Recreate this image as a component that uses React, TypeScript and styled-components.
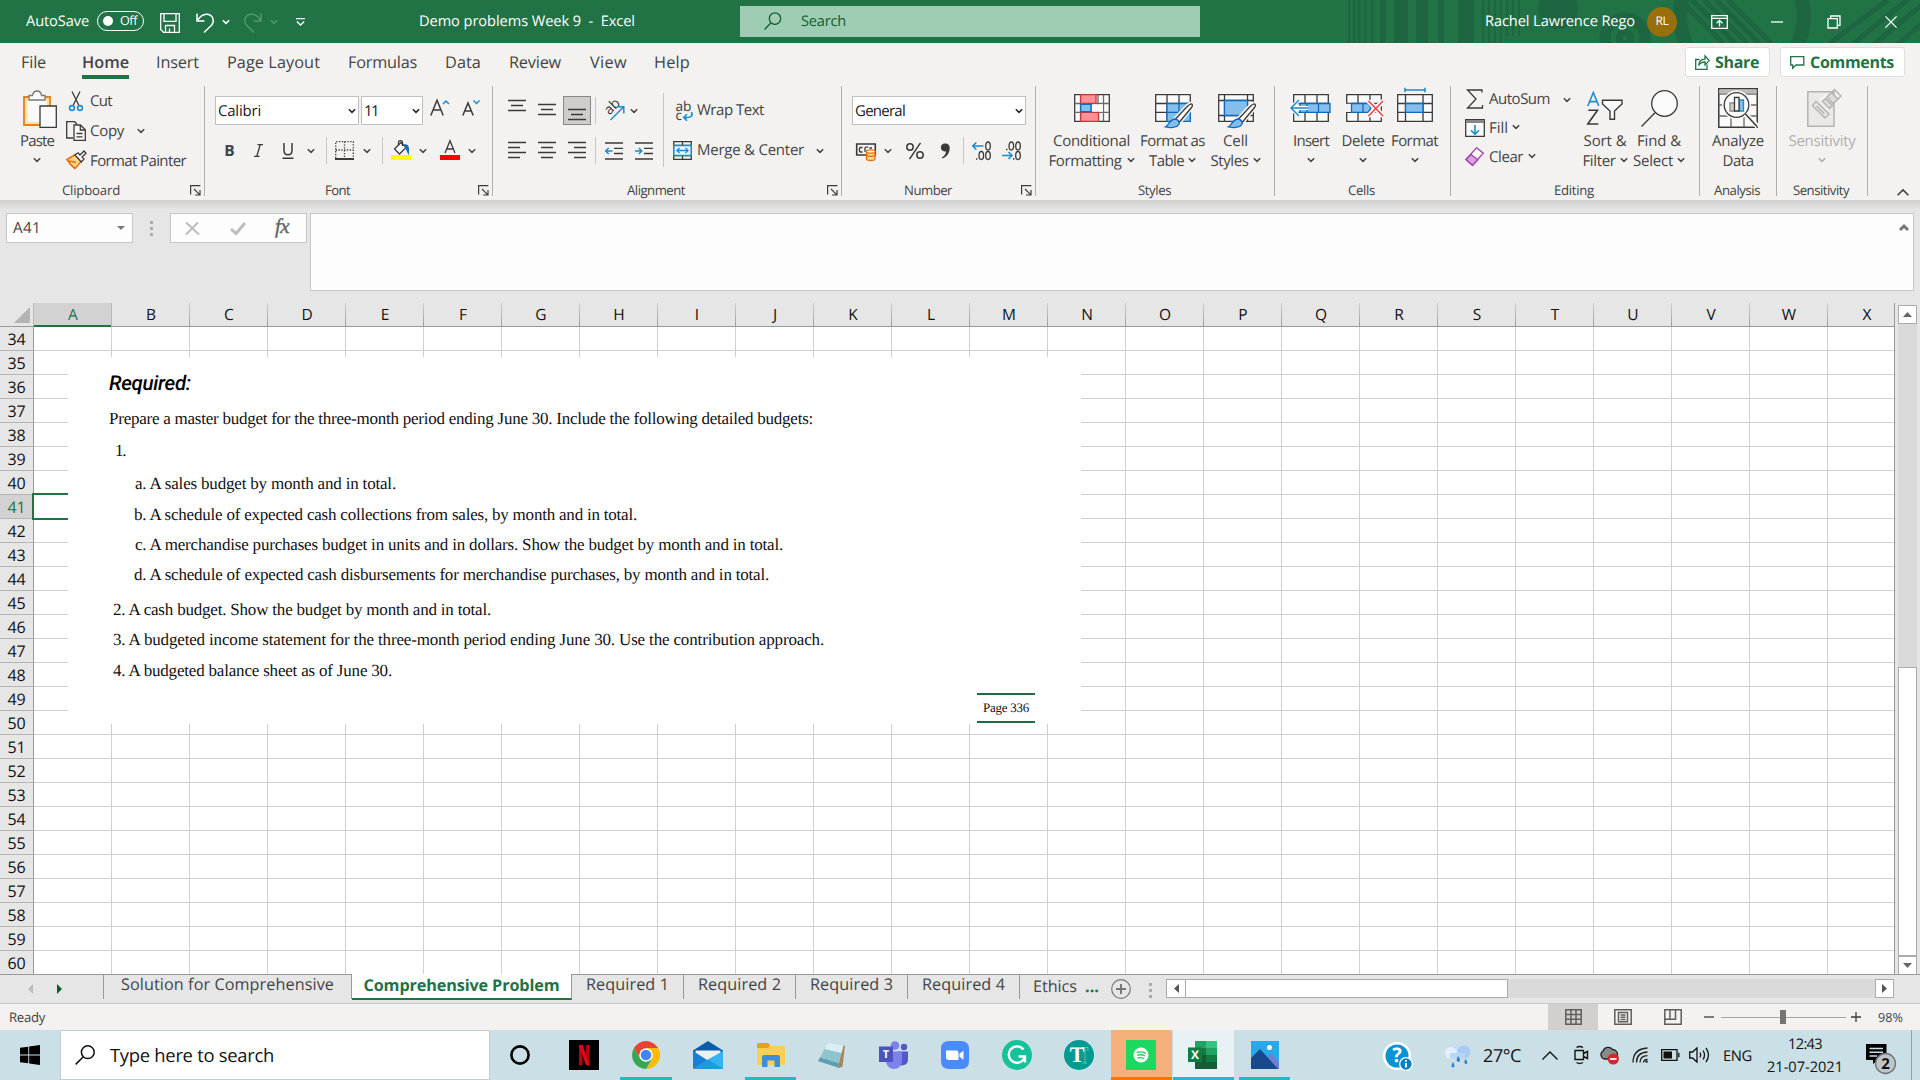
import React, { useLayoutEffect, useRef, useState } from "react";
import styled, { createGlobalStyle, css } from "styled-components";

const UI = `"Open Sans", "Noto Sans", "Liberation Sans", sans-serif`;
const GREEN = "#217346";
const INK = "#444444";

const Global = createGlobalStyle`
  *, *::before, *::after { box-sizing: border-box; }
  html, body { margin: 0; padding: 0; }
  body {
    width: 1920px; height: 1080px; overflow: hidden; background: #e6e6e6;
    font-family: ${UI}; color: ${INK}; text-rendering: geometricPrecision;
  }
`;

/* ---------- text ---------- */

const Txt = styled.span<{ $s: number; $c?: string; $b?: number; $ml?: number; $serif?: boolean }>`
  display: inline-block;
  flex: none;
  white-space: pre;
  line-height: 1.36;
  font-size: ${(p) => p.$s}px;
  color: ${(p) => p.$c ?? "inherit"};
  font-weight: ${(p) => p.$b ?? 400};
  margin-left: ${(p) => p.$ml ?? 0}px;
  ${(p) => p.$serif && css`font-family: "Liberation Serif", serif;`}
`;

type LabelProps = {
  children: string; w?: number; s?: number; c?: string; b?: number; ml?: number; serif?: boolean;
};

/* A label that tracks its letters in or out until the run is `w` pixels long. */
function Label({ children, w, s = 15, c, b, ml, serif }: LabelProps) {
  const ref = useRef<HTMLSpanElement>(null);
  const [track, setTrack] = useState(0);
  useLayoutEffect(() => {
    const el = ref.current;
    if (!el || !w) return;
    el.style.letterSpacing = "0px";
    const natural = el.getBoundingClientRect().width;
    setTrack((w - natural) / children.length);
    el.style.letterSpacing = `${(w - natural) / children.length}px`;
  }, [children, w, s]);
  return (
    <Txt ref={ref} $s={s} $c={c} $b={b} $ml={ml} $serif={serif} style={{ letterSpacing: track }}>
      {children}
    </Txt>
  );
}

/* ---------- glyphs ---------- */

const Svg = styled.svg<{ $ml?: number; $mt?: number }>`
  display: block;
  flex: none;
  overflow: visible;
  margin-left: ${(p) => p.$ml ?? 0}px;
  margin-top: ${(p) => p.$mt ?? 0}px;
  text { font-family: ${UI}; fill: #3b3a39; stroke: none; }
`;

type IconProps = { w: number; h: number; ml?: number; mt?: number; children: React.ReactNode; sw?: number; stroke?: string };
const Icon = ({ w, h, ml, mt, children, sw = 1.3, stroke = "#3b3a39" }: IconProps) => (
  <Svg width={w} height={h} viewBox={`0 0 ${w} ${h}`} $ml={ml} $mt={mt} fill="none" stroke={stroke} strokeWidth={sw}>
    {children}
  </Svg>
);

const Chevron = ({ ml, c = INK, mt }: { ml?: number; c?: string; mt?: number }) => (
  <Icon w={8} h={6} ml={ml} mt={mt} stroke={c} sw={1.5}><path d="M0.8 1.2 4 4.4 7.2 1.2" /></Icon>
);

/* ---------- title bar ---------- */

const TitleBar = styled.header`
  position: relative;
  display: flex;
  align-items: center;
  height: 43px;
  padding-left: 26px;
  background: ${GREEN};
  color: #fff;
`;
const Pattern = styled.svg`
  position: absolute;
  left: 1340px;
  top: 0;
`;
const Toggle = styled.div`
  display: flex;
  align-items: center;
  width: 47px;
  height: 20px;
  margin: -2px 0 0 8px;
  padding-left: 5px;
  border: 1px solid #fff;
  border-radius: 10px;
  &::before { content: ""; width: 10px; height: 10px; border-radius: 50%; background: #fff; }
`;
const SearchBox = styled.div`
  display: flex;
  align-items: center;
  width: 460px;
  height: 31px;
  margin-left: 105px;
  padding: 1px 0 0 24px;
  background: #9fcdb3;
`;
const Avatar = styled.div`
  display: grid;
  place-items: center;
  width: 30px;
  height: 30px;
  margin-left: 12px;
  border-radius: 50%;
  background: #986f0b;
`;
const Above = styled.div`
  position: relative;
  display: flex;
  align-items: center;
`;

function Title() {
  return (
    <TitleBar>
      <Pattern width="580" height="43" fill="none" stroke="#1e6541">
        <g fill="#1e6541" stroke="none">
          {[8, 13, 18, 24, 31].map((x) => <rect key={x} x={x} y="0" width="2.5" height="43" />)}
          <rect x="40" y="0" width="6" height="43" /><rect x="54" y="0" width="14" height="43" />
          <rect x="76" y="0" width="12" height="43" /><rect x="98" y="0" width="6" height="43" />
          <rect x="118" y="0" width="16" height="43" />
          {[142, 148, 154, 160, 166, 172, 178].map((x) => (
            <rect key={x} x={x} y="0" width="2" height={x > 165 ? 36 : 43} />
          ))}
          <circle cx="218" cy="9" r="20" />
        </g>
        <circle cx="285" cy="38" r="20" strokeWidth="11" />
        <circle cx="285" cy="38" r="6" strokeWidth="7" />
        <circle cx="402" cy="16" r="62" strokeWidth="14" />
        <g strokeWidth="5">
          <path d="M340 0 383 43M352 0 395 43M364 0 407 43M376 0 419 43M388 0 431 43" />
          <path d="M548 0 490 43M572 -4 514 43M590 -2 532 46M600 8 556 46" />
        </g>
      </Pattern>
      <Label w={63} s={14.6}>AutoSave</Label>
      <Toggle><Label ml={7} w={17} s={12.6}>Off</Label></Toggle>
      <Icon w={20} h={20} ml={16} stroke="#fff" mt={3}>
        <path d="M0.7 0.7H19.3V19.3H3.5L0.7 16.5ZM4 1V8.3H16V1M5.5 19V12.5H14.5V19M9.5 19V15.5" />
      </Icon>
      <Icon w={18} h={20} ml={16} mt={3} stroke="#fff" sw={1.5}>
        <path d="M1 0.5V8H8.5M1.2 7.8C4 3 8 .8 11.5 1.2 17 2 19 8 15.5 12.2L8 19.5" />
      </Icon>
      <Chevron ml={8} c="#fff" />
      <Icon w={18} h={20} ml={14} mt={3} stroke="#4f9870" sw={1.5}>
        <path d="M17 0.5V8H9.5M16.8 7.8C14 3 10 .8 6.5 1.2 1 2 -1 8 2.5 12.2L10 19.5" />
      </Icon>
      <Chevron ml={8} c="#4f9870" />
      <Icon w={9} h={8} ml={18} stroke="#fff" mt={1}><path d="M0 0.7H9M0.8 3.5 4.5 7 8.2 3.5" /></Icon>
      <Label w={216} s={14.6} ml={114}>{"Demo problems Week 9  -  Excel"}</Label>
      <SearchBox>
        <Icon w={18} h={18} stroke="#0f5c2f" mt={-3}><circle cx="11" cy="6.6" r="5.7" /><path d="M7 10.8 0.5 17.5" /></Icon>
        <Label ml={19} w={45} s={14.6} c="#0f5c2f">Search</Label>
      </SearchBox>
      <Above>
        <Label ml={285} w={150} s={14.6}>Rachel Lawrence Rego</Label>
        <Avatar><Label w={13} s={12}>RL</Label></Avatar>
        <Icon w={17} h={14} ml={34} stroke="#fff">
          <path d="M0.7 0.7H16.3V13.3H0.7ZM1 3.3H16M8.5 11.5V5.5M5.5 8.3 8.5 5.4 11.5 8.3" />
        </Icon>
        <Icon w={12} h={2} ml={43} stroke="#fff"><path d="M0 1H12" /></Icon>
        <Icon w={14} h={14} ml={44} stroke="#fff"><path d="M1 3.7H10.3V13H1ZM3.7 3.5V1H13V10.3H10.6" /></Icon>
        <Icon w={12} h={12} ml={44} stroke="#fff"><path d="M0.4 0.4 11.6 11.6M11.6 0.4 0.4 11.6" /></Icon>
      </Above>
    </TitleBar>
  );
}

/* ---------- ribbon tabs ---------- */

const RibbonTabs = styled.nav`
  display: flex;
  align-items: flex-start;
  height: 43px;
  background: #f3f2f1;
`;
const RibbonTab = styled.div<{ $ml: number; $on?: boolean }>`
  display: flex;
  height: 36px;
  padding-top: 8px;
  margin-left: ${(p) => p.$ml}px;
  border-bottom: 4px solid ${(p) => (p.$on ? GREEN : "transparent")};
`;
const Action = styled.div<{ $ml: number; $w: number }>`
  display: flex;
  align-items: center;
  width: ${(p) => p.$w}px;
  height: 30px;
  margin: 4px 0 0 ${(p) => p.$ml}px;
  padding: 1px 0 0 9px;
  background: #fff;
  border: 1px solid #e1dfdd;
  border-radius: 3px;
`;

const TABS: [string, number, number][] = [
  ["File", 21, 25], ["Home", 36, 47], ["Insert", 27, 43], ["Page Layout", 28, 93], ["Formulas", 28, 69],
  ["Data", 28, 36], ["Review", 28, 52], ["View", 29, 37], ["Help", 27, 36],
];

const Tabs = () => (
  <RibbonTabs>
    {TABS.map(([t, ml, w]) => (
      <RibbonTab key={t} $ml={ml} $on={t === "Home"}><Label w={w} s={16.3} b={t === "Home" ? 600 : 400}>{t}</Label></RibbonTab>
    ))}
    <Action $ml={995} $w={85}>
      <Icon w={15} h={15} stroke={GREEN}>
        <path d="M4.5 4.5H0.7V14.3H12V9.5M3.5 10.5C4 6 6.5 4.3 10 4.2V0.9L14.2 5.6 10 10V7C7 7 5 8 3.5 10.5Z" />
      </Icon>
      <Label ml={5} w={44} s={16} b={700} c={GREEN}>Share</Label>
    </Action>
    <Action $ml={10} $w={125}>
      <Icon w={15} h={13} stroke={GREEN}><path d="M0.7 0.7H13.8V9H6L2.7 12.2V9H0.7Z" /></Icon>
      <Label ml={5} w={84} s={16} b={700} c={GREEN}>Comments</Label>
    </Action>
  </RibbonTabs>
);

/* ---------- ribbon ---------- */

const RibbonBar = styled.section`
  display: flex;
  height: 114px;
  background: #f3f2f1;
`;
const Group = styled.div<{ $w: number }>`
  display: flex;
  flex-direction: column;
  width: ${(p) => p.$w}px;
  height: 110px;
  border-right: 1px solid #b1afad;
`;
const Body = styled.div<{ $pl?: number }>`
  display: flex;
  height: 98px;
  padding-left: ${(p) => p.$pl ?? 0}px;
`;
const Caption = styled.div`
  display: flex;
  align-items: center;
  height: 12px;
  > span { padding-top: 2px; }
`;
const Stack = styled.div<{ $ml?: number; $w?: number; $mt?: number; $row: number }>`
  display: grid;
  grid-auto-rows: ${(p) => p.$row}px;
  width: ${(p) => (p.$w ? p.$w + "px" : "auto")};
  margin: ${(p) => p.$mt ?? 0}px 0 0 ${(p) => p.$ml ?? 0}px;
`;
const Command = styled.div`
  display: flex;
  align-items: center;
`;
const IconCell = styled.div<{ $w: number; $ml?: number; $on?: boolean }>`
  display: flex;
  justify-content: center;
  align-items: center;
  flex: none;
  width: ${(p) => p.$w}px;
  height: 29px;
  margin-left: ${(p) => p.$ml ?? 0}px;
  ${(p) => p.$on && css`background: #cfcdcc; border: 1px solid #8a8886;`}
`;
const TwoRows = styled.div`
  display: grid;
  grid-template-rows: 29px 29px;
  row-gap: 11px;
  margin-top: 10px;
  align-content: start;
`;
const Row = styled.div`
  display: flex;
  align-items: center;
`;
const Divider = styled.i<{ $ml: number; $h?: number; $mt?: number }>`
  flex: none;
  width: 1px;
  height: ${(p) => p.$h ?? 27}px;
  margin: ${(p) => p.$mt ?? 0}px 0 0 ${(p) => p.$ml}px;
  background: #c8c6c4;
`;
const Combo = styled.div<{ $w: number; $ml?: number }>`
  display: flex;
  align-items: center;
  justify-content: space-between;
  width: ${(p) => p.$w}px;
  height: 29px;
  margin-left: ${(p) => p.$ml ?? 0}px;
  padding: 1px 2px 0 2px;
  border: 1px solid #c2c0be;
  background: #fff;
  color: #222;
`;
const BigButton = styled.div<{ $w: number; $ml?: number }>`
  display: grid;
  grid-template-rows: 45px 20px 20px;
  justify-items: center;
  align-items: center;
  align-content: start;
  width: ${(p) => p.$w}px;
  margin-left: ${(p) => p.$ml ?? 0}px;
`;
const Line = styled.div`
  display: flex;
  align-items: center;
`;

const Launcher = ({ ml }: { ml: number }) => (
  <Icon w={11} h={11} ml={ml} sw={1.2}><path d="M0.6 9.5V0.6H10.4M4 4 9.8 9.8M10 5V10H5" /></Icon>
);

const B = "#1e8bcd", LB = "#83beec";
const cellGrid = "M0.7 0.7H35.3V27.3H0.7ZM0.7 9.5H35.3M0.7 18.3H35.3M12 0.7V27.3M24 0.7V27.3";
const Brush = () => (
  <g>
    <path d="M36 9.5C38.5 10 38 12 36.5 14L24.5 29 19.5 25.5 31 13C33 11 34.5 9.7 36 9.5Z" fill="#fafafa" stroke="#f3f2f1" strokeWidth="3.5" />
    <path d="M36.5 9.8C38 10.5 37.5 12 36.5 13.5L24.5 28 20.5 25 31.5 13.2C33.5 11.2 35 9.8 36.5 9.8Z" fill="#fafafa" />
    <path d="M20 25C23 25.5 25 28 23.8 30.5 21.5 34 15 34 10.5 32.8 14 31.5 13.5 26 20 25Z" fill={LB} stroke="#0f6cbd" />
  </g>
);

const AlignLines = ({ rows, mt = 0, sw = 1.5 }: { rows: [number, number][]; mt?: number; sw?: number }) => (
  <Icon w={18} h={rows.length * 5} mt={mt} sw={sw}>
    {rows.map(([a, b], i) => <path key={i} d={`M${a} ${i * 5 + 1.5}H${b}`} />)}
  </Icon>
);

function Ribbon() {
  return (
    <RibbonBar>
      <Group $w={205}>
        <Body $pl={17}>
          <BigButton $w={38}>
            <Icon w={34} h={39} ml={6} mt={1}>
              <path d="M1 7H27V35H1Z" fill="#ffe0a0" stroke="#e3831c" strokeWidth="1.8" />
              <path d="M4.5 10H23.5V32H4.5Z" fill="#fafafa" stroke="none" />
              <path d="M6 10V5.5H9.5C10 2.5 12 1 14 1S18 2.5 18.5 5.5H22V10Z" fill="#fafafa" stroke="#7a7877" />
              <path d="M17 16H33.3V37.3H17Z" fill="#fafafa" />
            </Icon>
            <Label w={34}>Paste</Label><Chevron mt={-2} />
          </BigButton>
          <Stack $ml={11} $row={30}>
            <Command>
              <Icon w={20} h={20}>
                <path d="M6 0.5 12.7 14M14 0.5 7.3 14" /><circle cx="6" cy="17" r="2.4" stroke={B} strokeWidth="1.6" />
                <circle cx="14" cy="17" r="2.4" stroke={B} strokeWidth="1.6" />
              </Icon>
              <Label ml={4} w={22}>Cut</Label>
            </Command>
            <Command>
              <Icon w={20} h={20}>
                <path d="M7 17H0.7V0.7H8.5L11 3" /><path d="M8 4H14.5L19.3 8.8V19.3H8Z" fill="#fafafa" /><path d="M14.3 4V9H19M10.5 12.5H16.5M10.5 15.8H16.5" />
              </Icon>
              <Label ml={4} w={34}>Copy</Label><Chevron ml={13} />
            </Command>
            <Command>
              <Icon w={20} h={20} mt={-3}>
                <path d="M1 9.5 9.5 4.5 15.5 11 9 18.5C6 16.5 3 13 1 9.5Z" fill="#ffd68a" stroke="#e3700c" strokeWidth="1.6" />
                <path d="M3 11 10 12.5" stroke="#e3700c" />
                <path d="M9 5 12 2.8 14 5 18 1 20 3.2 16 7 18 9 15.3 12Z" fill="#fafafa" />
              </Icon>
              <Label ml={4} w={96}>Format Painter</Label>
            </Command>
          </Stack>
        </Body>
        <Caption><Label ml={62} w={58} s={13.2}>Clipboard</Label><Launcher ml={70} /></Caption>
      </Group>

      <Group $w={288}>
        <Body $pl={10}>
          <TwoRows>
            <Row>
              <Combo $w={144}><Label w={43}>Calibri</Label><Chevron c="#222" /></Combo>
              <Combo $w={62} $ml={2}><Label w={14}>11</Label><Chevron c="#222" /></Combo>
              <Icon w={20} h={20} ml={7} mt={-6} sw={1.5}>
                <path d="M0.8 17.5 7 2.3 13.2 17.5M3 12H11" /><path d="M13 6 16 3 19 6" stroke={B} />
              </Icon>
              <Icon w={18} h={20} ml={12} mt={-6} sw={1.5}>
                <path d="M0.8 17.5 6 5 11.2 17.5M3 13H9" /><path d="M11.5 2.5 14.5 5.5 17.5 2.5" stroke={B} />
              </Icon>
            </Row>
            <Row>
              <IconCell $w={29}><Label s={15.5} b={700}>B</Label></IconCell>
              <IconCell $w={29}><Icon w={9} h={13} mt={-1}><path d="M3.5 .7H9M0 12.3H5.5M6.2 .7 2.8 12.3" /></Icon></IconCell>
              <IconCell $w={29}><Icon w={12} h={16} mt={1} sw={1.5}><path d="M2 0V7.5C2 13.3 10 13.3 10 7.5V0M0.5 15.3H11.5" /></Icon></IconCell>
              <IconCell $w={18}><Chevron /></IconCell>
              <Divider $ml={6} />
              <IconCell $w={29} $ml={3}>
                <Icon w={19} h={19} mt={-1}>
                  <path d="M0.7 17V0.7H18.3V17M9.5 0.7V17M0.7 9H18.3" strokeDasharray="1.3 1.5" /><path d="M0 18H19" strokeWidth="2" />
                </Icon>
              </IconCell>
              <IconCell $w={16}><Chevron /></IconCell>
              <Divider $ml={7} />
              <IconCell $w={30} $ml={3}>
                <Icon w={20} h={20} mt={-1}>
                  <path d="M3.5 9 10 2.5 15 7.5 8.5 14Z" fill="#fafafa" /><path d="M7.5 5V2.5C7.5 0 11.5 0 11.5 3V6" />
                  <path d="M13.5 5C17 4.5 17.8 7 17.3 13L15.5 9Z" fill="#0f6cbd" stroke="#0f6cbd" />
                  <path d="M0 15H20V20H0Z" fill="#ff0" stroke="none" />
                </Icon>
              </IconCell>
              <IconCell $w={14}><Chevron /></IconCell>
              <IconCell $w={30} $ml={5}>
                <Icon w={20} h={20} mt={-1}><path d="M5 13 10 0.8 15 13M6.7 9H13.3" /><path d="M0 15H20V20H0Z" fill="#f00" stroke="none" /></Icon>
              </IconCell>
              <IconCell $w={14}><Chevron /></IconCell>
            </Row>
          </TwoRows>
        </Body>
        <Caption><Label ml={120} w={25} s={13.2}>Font</Label><Launcher ml={128} /></Caption>
      </Group>

      <Group $w={349}>
        <Body $pl={9}>
          <TwoRows>
            <Row>
              <IconCell $w={30}><AlignLines rows={[[0, 18], [3, 15], [0, 18]]} mt={-9} /></IconCell>
              <IconCell $w={30}><AlignLines rows={[[0, 18], [3, 15], [0, 18]]} mt={-1} /></IconCell>
              <IconCell $w={28} $ml={1} $on><AlignLines rows={[[0, 18], [3, 15], [0, 18]]} mt={9} /></IconCell>
              <Divider $ml={4} />
              <IconCell $w={28} $ml={4}>
                <Icon w={21} h={20}>
                  <text x="0" y="0" fontSize="14" transform="translate(5.5 14.5) rotate(-45)">ab</text>
                  <path d="M6.5 19 19.5 6M13 5.8H19.8V12.5" stroke={B} strokeWidth="1.5" />
                </Icon>
              </IconCell>
              <IconCell $w={12}><Chevron /></IconCell>
            </Row>
            <Row>
              <IconCell $w={30}><AlignLines rows={[[0, 18], [0, 12], [0, 18], [0, 12]]} /></IconCell>
              <IconCell $w={30}><AlignLines rows={[[0, 18], [3, 15], [0, 18], [3, 15]]} /></IconCell>
              <IconCell $w={30}><AlignLines rows={[[0, 18], [6, 18], [0, 18], [6, 18]]} /></IconCell>
              <Divider $ml={3} />
              <IconCell $w={28} $ml={4}>
                <Icon w={18} h={18}><path d="M0 1H18M9 6.3H18M9 11.5H18M0 17H18" /><path d="M7.5 9H0.7M3.7 6 0.7 9 3.7 12" stroke={B} strokeWidth="1.5" /></Icon>
              </IconCell>
              <IconCell $w={32}>
                <Icon w={18} h={18}><path d="M0 1H18M9 6.3H18M9 11.5H18M0 17H18" /><path d="M0 9H6.8M3.8 6 6.8 9 3.8 12" stroke={B} strokeWidth="1.5" /></Icon>
              </IconCell>
            </Row>
          </TwoRows>
          <Divider $ml={3} $h={74} $mt={7} />
          <TwoRows>
            <Row>
              <Icon w={17} h={20} ml={12} sw={1.4}>
                <text x="-0.5" y="9.5" fontSize="13.5" textLength="16" lengthAdjust="spacingAndGlyphs">ab</text>
                <text x="-0.5" y="19" fontSize="13.5">c</text>
                <path d="M15.5 11C17.5 15.5 14 17 8 16.5M11 13.2 7.7 16.5 11 19.8" stroke={B} strokeWidth="1.6" />
              </Icon>
              <Label ml={4} w={67}>Wrap Text</Label>
            </Row>
            <Row>
              <Icon w={19} h={19} ml={9} mt={-1}>
                <path d="M0.7 0.7H18.3V18.3H0.7ZM0.7 4.5H18.3M0.7 14.5H18.3M9.5 .7V4.5M9.5 14.5V18" />
                <path d="M0.8 4.5H18.2V14.5H0.8Z" fill="#e9f4fb" stroke={B} strokeWidth="1.6" /><path d="M4 9.5H15M6.5 7 4 9.5 6.5 12M12.5 7 15 9.5 12.5 12" stroke={B} />
              </Icon>
              <Label ml={5} w={107}>{"Merge & Center"}</Label><Chevron ml={12} />
            </Row>
          </TwoRows>
        </Body>
        <Caption><Label ml={134} w={58} s={13.2}>Alignment</Label><Launcher ml={142} /></Caption>
      </Group>

      <Group $w={194}>
        <Body $pl={10}>
          <TwoRows>
            <Combo $w={174}><Label w={50}>General</Label><Chevron c="#222" /></Combo>
            <Row>
              <IconCell $w={28}>
                <Icon w={20} h={20}>
                  <path d="M0.7 3H19.3V14H0.7Z" strokeWidth="1.6" /><path d="M6.5 6.5H4.5C3 6.5 3 11 4.5 11H6.5M9 11V7C9 6 12 6 12 6.5M13.5 7H16" />
                  <path d="M10.5 10.5V18C10.5 20 19 20 19 18V10.5Z" fill="#ffd68a" stroke="#e3700c" /><ellipse cx="14.8" cy="10.5" rx="4.3" ry="1.7" fill="#fff" stroke="#e3700c" /><path d="M10.5 14C11 15.8 18.5 15.8 19 14" stroke="#e3700c" />
                </Icon>
              </IconCell>
              <IconCell $w={16}><Chevron /></IconCell>
              <IconCell $w={37}>
                <Icon w={18} h={18} sw={1.5}><circle cx="4" cy="5" r="3.2" /><circle cx="14" cy="13" r="3.2" /><path d="M14.5 0.8 3.5 17.2" /></Icon>
              </IconCell>
              <IconCell $w={25}>
                <Icon w={9} h={16}><path d="M4.3 0.5A4 4 0 0 1 8.7 5C8.7 10 6 14 1.3 15.5L.8 14.6C3.5 13 5 11 5 8.3A4 4 0 1 1 4.3 0.5Z" fill="#3b3a39" stroke="none" /></Icon>
              </IconCell>
              <Divider $ml={5} />
              <IconCell $w={27} $ml={4}>
                <Icon w={19} h={19} mt={-1}>
                  <path d="M11.5 5H0.8M4.3 1.5 0.8 5 4.3 8.5" stroke={B} strokeWidth="1.6" /><ellipse cx="16" cy="5" rx="2.3" ry="4" />
                  <ellipse cx="9.3" cy="14.5" rx="2.3" ry="4" /><ellipse cx="16" cy="14.5" rx="2.3" ry="4" /><path d="M4 18H5.4" />
                </Icon>
              </IconCell>
              <IconCell $w={32}>
                <Icon w={19} h={19} mt={-1}>
                  <ellipse cx="9.3" cy="5" rx="2.3" ry="4" /><ellipse cx="16" cy="5" rx="2.3" ry="4" /><path d="M4 8.5H5.4M11 18H12.4" />
                  <ellipse cx="16" cy="14.5" rx="2.3" ry="4" /><path d="M0 14.5H10M6.5 11 10 14.5 6.5 18" stroke={B} strokeWidth="1.6" />
                </Icon>
              </IconCell>
            </Row>
          </TwoRows>
        </Body>
        <Caption><Label ml={62} w={48} s={13.2}>Number</Label><Launcher ml={69} /></Caption>
      </Group>

      <Group $w={239}>
        <Body $pl={10}>
          <BigButton $w={91}>
            <Icon w={36} h={28} mt={-1}>
              <path d="M0.7 0.7H35.3V27.3H0.7Z" fill="#fafafa" /><path d="M0.7 9.5H35.3M0.7 18.3H35.3M6.5 0.7V27.3M18 .7V27M24 .7V27M29.5 0.7V27.3" stroke="#6b6967" />
              <path d="M6.7 0.7H22V9.5H6.7ZM6.7 18.3H24.5V27.3H6.7Z" fill="#ff9196" stroke="#d13438" /><path d="M6.7 10.3H17V17.6H6.7Z" fill={LB} stroke="#0f6cbd" />
              <path d="M18 10.3H29V17.6H18Z" fill="#fafafa" stroke="none" />
            </Icon>
            <Label w={77}>Conditional</Label>
            <Line><Label w={73}>Formatting</Label><Chevron ml={5} mt={-3} /></Line>
          </BigButton>
          <BigButton $w={71}>
            <Icon w={38} h={28} ml={2} mt={-1}>
              <path d={cellGrid} fill="#fafafa" /><path d="M12 9.5H35.3V27.3H12ZM12 18.3H35M24 9.5V27" fill={LB} stroke="#0f6cbd" /><Brush />
            </Icon>
            <Label w={65}>Format as</Label>
            <Line><Label w={35}>Table</Label><Chevron ml={4} mt={-3} /></Line>
          </BigButton>
          <BigButton $w={55}>
            <Icon w={38} h={28} ml={3} mt={-1}>
              <path d="M0.7 0.7H35.3V27.3H0.7ZM0.7 6.5H35.3M0.7 21.5H35.3M6.5 .7V27.3M29.5 .7V27.3" fill="#fafafa" />
              <path d="M6.5 6.5H29.5V21.5H6.5Z" fill={LB} stroke="#0f6cbd" /><Brush />
            </Icon>
            <Label w={25}>Cell</Label>
            <Line><Label w={38}>Styles</Label><Chevron ml={4} mt={-3} /></Line>
          </BigButton>
        </Body>
        <Caption><Label ml={102} w={33} s={13.2}>Styles</Label></Caption>
      </Group>

      <Group $w={176}>
        <Body $pl={9}>
          <BigButton $w={54}>
            <Icon w={38} h={28} mt={-1} ml={2}>
              <path d={cellGrid} fill="#fafafa" /><path d="M7 9.5H37V18.3H7ZM14 9.5V18M25.5 9.5V18" fill={LB} stroke="#0f6cbd" />
              <path d="M15 14H-1.5M6 6-2 14 6 22" stroke="#fafafa" strokeWidth="4" /><path d="M15 14H-1.5M6 6-2 14 6 22" stroke={B} strokeWidth="1.5" />
            </Icon>
            <Label w={36}>Insert</Label><Chevron mt={-2} />
          </BigButton>
          <BigButton $w={50}>
            <Icon w={36} h={28} mt={-1} ml={1}>
              <path d={cellGrid} fill="#fafafa" /><path d="M0 9.8H6V18H0Z" fill="#f3f2f1" stroke="none" /><path d="M5.5 9.5H22L25 14 22 18.3H5.5ZM17 9.5V18" fill={LB} stroke="#0f6cbd" />
              <path d="M22.5 7 37 22M37 7 22.5 22" stroke="#fafafa" strokeWidth="5" /><path d="M22.5 7 37 22M37 7 22.5 22" stroke="#f03e3e" strokeWidth="1.5" />
            </Icon>
            <Label w={43}>Delete</Label><Chevron mt={-2} />
          </BigButton>
          <BigButton $w={53}>
            <Icon w={36} h={28} mt={-1}>
              <path d="M0.7 0.7H35.3V27.3H0.7ZM0.7 9.5H35.3M0.7 18.3H35.3M8.5 .7V27.3M26 .7V27.3" fill="#fafafa" />
              <path d="M8.5 9.5H26V18.3H8.5Z" fill={LB} stroke="#0f6cbd" /><path d="M8 -4H28M8 -6.3V-1.7M28 -6.3V-1.7" stroke={B} strokeWidth="1.5" />
            </Icon>
            <Label w={47}>Format</Label><Chevron mt={-2} />
          </BigButton>
        </Body>
        <Caption><Label ml={73} w={27} s={13.2}>Cells</Label></Caption>
      </Group>

      <Group $w={249}>
        <Body $pl={14}>
          <Stack $row={29} $mt={-1} $w={115}>
            <Command>
              <Icon w={20} h={20} mt={-2}><path d="M17 3.5V1H2.5L11 10 2.5 19H17.5V16" /></Icon>
              <Label ml={4} w={61}>AutoSum</Label><Chevron ml={13} />
            </Command>
            <Command>
              <Icon w={20} h={18} mt={-1}><path d="M0.7 0.7H19.3V17.3H0.7Z" fill="#fafafa" /><path d="M1 2.5H19" stroke="#8a8886" strokeWidth="3" /><path d="M10 6V15M6 11.3 10 15.3 14 11.3" stroke={B} strokeWidth="1.6" /></Icon>
              <Label ml={4} w={19}>Fill</Label><Chevron ml={4} mt={-3} />
            </Command>
            <Command>
              <Icon w={20} h={20} stroke="#a33cb0" mt={-1}><path d="M11.5 0.8 18.3 6.2 7.5 18.3 1 12.5Z" fill="#fafafa" /><path d="M6 7.5 12.8 12.8 7.5 18.3 1 12.5Z" fill="#d9a3df" /></Icon>
              <Label ml={4} w={34}>Clear</Label><Chevron ml={5} mt={-3} />
            </Command>
          </Stack>
          <BigButton $w={50}>
            <Icon w={36} h={35} sw={1.6} mt={-1}>
              <path d="M0.8 15 6.3 1.5 11.8 15M2.6 10.6H10" stroke={B} /><path d="M1.3 19.2H10.5L0.8 33H11.3" />
              <path d="M15.5 9.3H35V13L27.5 20V28.3H23V20L15.5 13Z" fill="#fafafa" strokeWidth="1.4" />
            </Icon>
            <Label w={43}>{"Sort &"}</Label>
            <Line><Label w={33}>Filter</Label><Chevron ml={4} mt={-3} /></Line>
          </BigButton>
          <BigButton $w={58}>
            <Icon w={37} h={37} mt={-1}><circle cx="23.5" cy="13.5" r="12.8" fill="#fafafa" /><path d="M14 22.8 0.5 36.5" /></Icon>
            <Label w={44}>{"Find &"}</Label>
            <Line><Label w={40}>Select</Label><Chevron ml={4} mt={-3} /></Line>
          </BigButton>
        </Body>
        <Caption><Label ml={103} w={40} s={13.2}>Editing</Label></Caption>
      </Group>

      <Group $w={77}>
        <Body $pl={11}>
          <BigButton $w={54}>
            <Icon w={40} h={40} mt={-1}>
              <path d="M0.8 0.8H39.2V39.2H0.8Z" fill="#fafafa" strokeWidth="1.5" /><path d="M1.5 3.5H38.5" stroke="#bdbbb9" strokeWidth="4" />
              <path d="M1 6.2H39M1 17H39M1 28H39M13 28V39M26 28V39" stroke="#6b6967" />
              <circle cx="18.5" cy="17" r="14.5" fill="#fafafa" stroke="none" /><circle cx="18.5" cy="17" r="12.3" fill="#fafafa" />
              <path d="M27.5 26 39.5 38.5" stroke="#fafafa" strokeWidth="5" /><path d="M27.5 26 39 38.5" strokeWidth="1.6" />
              <path d="M12 15H16.5V23H12Z" fill="#d2d0ce" stroke="#8a8886" /><path d="M21 12H25.5V23H21Z" fill={LB} stroke={B} /><path d="M16.5 9.5H21V23H16.5Z" fill="#fff" />
            </Icon>
            <Label w={52}>Analyze</Label><Label w={31}>Data</Label>
          </BigButton>
        </Body>
        <Caption><Label ml={14} w={46} s={13.2}>Analysis</Label></Caption>
      </Group>

      <Group $w={91}>
        <Body $pl={10}>
          <BigButton $w={70}>
            <Icon w={34} h={38} stroke="#b5b3b1" ml={4} mt={-2} sw={1.5}>
              <path d="M0.8 2.8H27V37.2H0.8Z" fill="#ebe9e8" />
              <path d="M19 4 26 12 20.5 22 12 10Z" fill="#f3f2f1" stroke="none" />
              <path d="M9 12.5 22 25 18 29 5.5 16.5ZM9.5 17 17.5 25" /><path d="M15.5 12.5 18.5 9.5 25.5 16.5 22.5 19.5ZM20 8 24.5 3.5 31 10 26 14.5Z" fill="#dedcdb" /><path d="M24.5 3.5 27.5 0.5 34 7 31 10" />
            </Icon>
            <Label w={67} c="#b1afad">Sensitivity</Label><Chevron c="#b1afad" mt={-2} />
          </BigButton>
        </Body>
        <Caption><Label ml={16} w={56} s={13.2}>Sensitivity</Label></Caption>
      </Group>
      <Icon w={12} h={7} ml={29} mt={103} sw={1.5}><path d="M0.6 6.3 6 0.9 11.4 6.3" /></Icon>
    </RibbonBar>
  );
}

/* ---------- formula bar ---------- */

const FormulaBar = styled.section`
  display: flex;
  align-items: flex-start;
  height: 103px;
  padding: 13px 0 0 6px;
  background: linear-gradient(#cfcfcf, #e6e6e6 10px);
`;
const NameBox = styled.div`
  display: flex;
  align-items: center;
  width: 127px;
  height: 30px;
  padding-left: 6px;
  background: #fdfdfd;
  border: 1px solid #c6c6c6;
  > span { padding-top: 1px; }
`;
const FxBox = styled(NameBox)`
  width: 137px;
  margin-left: 17px;
`;
const FormulaInput = styled.div`
  width: 1604px;
  height: 78px;
  margin-left: 3px;
  padding: 10px 0 0 1588px;
  background: #fdfdfd;
  border: 1px solid #c6c6c6;
`;
const Dots = styled.div<{ $ml: number; $mt?: number }>`
  display: grid;
  gap: 3px;
  width: 3px;
  margin: ${(p) => p.$mt ?? 0}px 0 0 ${(p) => p.$ml}px;
  i { width: 3px; height: 3px; background: #ababab; }
`;
const Fx = styled.b`
  margin: -3px 0 0 29px;
  font: italic 400 21px/1 "Liberation Serif", serif;
  letter-spacing: -0.5px;
  color: #666;
  -webkit-text-stroke: 0.4px #666;
`;

const Formula = () => (
  <FormulaBar>
    <NameBox>
      <Label w={28} s={15.2}>A41</Label>
      <Icon w={8} h={4} ml={76}><path d="M0 0H8L4 4Z" fill="#777" stroke="none" /></Icon>
    </NameBox>
    <Dots $ml={17} $mt={8}><i /><i /><i /></Dots>
    <FxBox>
      <Icon w={15} h={13} ml={8} stroke="#bdbdbd" sw={2}><path d="M1 .5 14 12.5M13 .5 1 12.5" /></Icon>
      <Icon w={16} h={13} ml={30} stroke="#bdbdbd" sw={3}><path d="M1 7 6 11.5 15 1" /></Icon>
      <Fx>fx</Fx>
    </FxBox>
    <FormulaInput><Icon w={10} h={7} stroke="#777" sw={3}><path d="M1 6 5 2 9 6" /></Icon></FormulaInput>
  </FormulaBar>
);

/* ---------- sheet ---------- */

const Sheet = styled.main`
  position: relative;
  display: flex;
  height: 672px;
`;
const GridPane = styled.div`
  width: 1895px;
  border-right: 1px solid #999;
  overflow: hidden;
  background: #fff;
`;
const HeadRow = styled.div`
  display: flex;
  width: 1910px;
  height: 24px;
  background: #e6e6e6;
  border-bottom: 1px solid #999;
`;
const Corner = styled.div`
  display: flex;
  flex: none;
  width: 34px;
  padding: 4px 0 0 14px;
  border-right: 1px solid #b8b8b8;
`;
const ColHead = styled.div<{ $on?: boolean }>`
  flex: none;
  width: 78px;
  height: 23px;
  padding-left: 1px;
  text-align: center;
  font-size: 15.5px;
  line-height: 23px;
  color: ${(p) => (p.$on ? GREEN : "#111")};
  border-right: 1px solid;
  border-image: linear-gradient(#d2d2d2, #999) 1;
  ${(p) => p.$on && css`height: 24px; background: #d2d2d2; border-image: none; border-right-color: #b8b8b8; box-shadow: inset 0 -2px ${GREEN};`}
`;
const GridRow = styled.div`
  display: flex;
  width: 1910px;
  height: 24px;
`;
const RowHead = styled.div<{ $on?: boolean }>`
  flex: none;
  width: 34px;
  text-align: center;
  font-size: 16px;
  line-height: 25px;
  letter-spacing: -0.2px;
  color: ${(p) => (p.$on ? GREEN : "#111")};
  background: ${(p) => (p.$on ? "#d2d2d2" : "#e6e6e6")};
  border-right: 1px solid #999;
  border-bottom: 1px solid #b5b5b5;
`;
const Cell = styled.div`
  flex: none;
  width: 78px;
  border-right: 1px solid #d0d0d0;
  border-bottom: 1px solid #d0d0d0;
`;
const Selection = styled.div`
  position: absolute;
  left: 32px;
  top: 190px;
  width: 81px;
  height: 27px;
  border: 2px solid ${GREEN};
`;
const Clip = styled.article`
  position: absolute;
  left: 68px;
  top: 54px;
  width: 1013px;
  height: 367px;
  padding-left: 41px;
  background: #fff;
  color: #111;
`;
const Heading = styled.h1`
  margin: 15px 0 0 0;
  height: 24px;
  font: italic 500 20.5px/24px Roboto, sans-serif;
  letter-spacing: -0.3px;
  color: #000;
`;
const Para = styled.p<{ $ml?: number; $mt: number }>`
  display: flex;
  align-items: center;
  height: 20px;
  margin: ${(p) => p.$mt}px 0 0 ${(p) => p.$ml ?? 0}px;
`;
const PageTag = styled.div`
  display: grid;
  place-items: center;
  width: 58px;
  height: 30px;
  margin: 12px 0 0 868px;
  border: solid #1f6b41;
  border-width: 2px 0;
`;
const VScroll = styled.div`
  display: flex;
  flex-direction: column;
  width: 19px;
  height: 670px;
  margin: 2px 0 0 3px;
  background: #dadada;
`;
const ScrollPart = styled.div<{ $w: number; $h: number; $ml?: number; $mt?: number }>`
  display: grid;
  place-items: center;
  flex: none;
  width: ${(p) => p.$w}px;
  height: ${(p) => p.$h}px;
  margin: ${(p) => p.$mt ?? 0}px 0 0 ${(p) => p.$ml ?? 0}px;
  background: #fff;
  border: 1px solid #ababab;
`;

const COLS = "ABCDEFGHIJKLMNOPQRSTUVWX".split("");
const ROWS = Array.from({ length: 27 }, (_, i) => 34 + i);
const PARAS: [string, number, number, number][] = [
  ["Prepare a master budget for the three-month period ending June 30. Include the following detailed budgets:", 0, 13, 704],
  ["1.", 6, 12, 10],
  ["a. A sales budget by month and in total.", 26, 13, 261],
  ["b. A schedule of expected cash collections from sales, by month and in total.", 25, 11, 503],
  ["c. A merchandise purchases budget in units and in dollars. Show the budget by month and in total.", 26, 10, 648],
  ["d. A schedule of expected cash disbursements for merchandise purchases, by month and in total.", 25, 10, 635],
  ["2. A cash budget. Show the budget by month and in total.", 4, 15, 378],
  ["3. A budgeted income statement for the three-month period ending June 30. Use the contribution approach.", 4, 10, 711],
  ["4. A budgeted balance sheet as of June 30.", 4, 11, 279],
];

const Workbook = () => (
  <Sheet>
    <GridPane>
      <HeadRow>
        <Corner><Icon w={16} h={16}><path d="M16 0V16H0Z" fill="#b3b3b3" stroke="none" /></Icon></Corner>
        {COLS.map((c) => <ColHead key={c} $on={c === "A"}>{c}</ColHead>)}
      </HeadRow>
      {ROWS.map((r) => (
        <GridRow key={r}>
          <RowHead $on={r === 41}>{r}</RowHead>
          {COLS.map((c) => <Cell key={c} />)}
        </GridRow>
      ))}
    </GridPane>
    <VScroll>
      <ScrollPart $w={19} $h={19}><Icon w={9} h={5}><path d="M0 5H9L4.5 0Z" fill="#666" stroke="none" /></Icon></ScrollPart>
      <ScrollPart $w={19} $h={289} $mt={343} />
      <ScrollPart $w={19} $h={19}><Icon w={9} h={5}><path d="M0 0H9L4.5 5Z" fill="#666" stroke="none" /></Icon></ScrollPart>
    </VScroll>
    <Selection />
    <Clip>
      <Heading>Required:</Heading>
      {PARAS.map(([t, ml, mt, w]) => (
        <Para key={t} $ml={ml} $mt={mt}><Label serif s={17} w={w}>{t}</Label></Para>
      ))}
      <PageTag><Label serif s={13} w={46}>Page 336</Label></PageTag>
    </Clip>
  </Sheet>
);

/* ---------- sheet tabs + status ---------- */

const SheetBar = styled.div`
  display: flex;
  align-items: flex-start;
  height: 29px;
  background: #e6e6e6;
  border-top: 1px solid #999;
`;
const SheetTab = styled.div<{ $w: number; $on?: boolean }>`
  display: flex;
  align-items: center;
  justify-content: center;
  flex: none;
  width: ${(p) => p.$w}px;
  height: 24px;
  padding-bottom: 5px;
  border-right: 1px solid #999;
  ${(p) => p.$on && css`height: 26px; margin-top: -1px; padding-bottom: 2px; background: #fff; border: solid ${GREEN}; border-width: 0 1px 2px 0; border-right-color: #999;`}
`;
const TabNav = styled.div`
  display: flex;
  align-items: center;
  width: 104px;
  height: 24px;
  padding: 4px 0 0 28px;
  border-right: 1px solid #999;
`;
const HTrack = styled.div`
  display: flex;
  width: 728px;
  height: 19px;
  margin: 4px 0 0 14px;
  background: #dadada;
`;
const StatusBar = styled.div`
  display: flex;
  align-items: center;
  height: 27px;
  padding-left: 9px;
  background: #f3f2f1;
  border-top: 1px solid #c6c6c6;
  > span { padding-top: 2px; }
`;
const ViewCell = styled.div<{ $on?: boolean; $ml?: number }>`
  display: grid;
  place-items: center;
  width: 50px;
  height: 26px;
  margin-left: ${(p) => p.$ml ?? 0}px;
  background: ${(p) => (p.$on ? "#d2d0ce" : "transparent")};
`;

const Bottom = () => (
  <>
    <SheetBar>
      <TabNav>
        <Icon w={5} h={10}><path d="M5 0V10L0 5Z" fill="#bbb" stroke="none" /></Icon>
        <Icon w={5} h={10} ml={24}><path d="M0 0V10L5 5Z" fill="#0e5c2f" stroke="none" /></Icon>
      </TabNav>
      <SheetTab $w={248}><Label s={16.2} w={213}>Solution for Comprehensive</Label></SheetTab>
      <SheetTab $w={220} $on><Label s={16.2} b={700} c={GREEN} w={196}>Comprehensive Problem</Label></SheetTab>
      {[1, 2, 3, 4].map((n) => (
        <SheetTab key={n} $w={112}><Label s={16.2} w={83}>{`Required ${n}`}</Label></SheetTab>
      ))}
      <Label s={16.2} w={44} ml={13}>Ethics</Label>
      <Label s={16.2} w={14} b={700} ml={8} c={GREEN}>...</Label>
      <Icon w={20} h={20} ml={12} mt={4} stroke="#777" sw={1.2}><circle cx="10" cy="10" r="9.3" /><path d="M5 10H15M10 5V15" strokeWidth="2" /></Icon>
      <Dots $ml={18} $mt={8}><i /><i /><i /></Dots>
      <HTrack>
        <ScrollPart $w={20} $h={19}><Icon w={5} h={9}><path d="M5 0V9L0 4.5Z" fill="#555" stroke="none" /></Icon></ScrollPart>
        <ScrollPart $w={323} $h={19} $ml={-1} />
        <ScrollPart $w={19} $h={19} $ml={367}><Icon w={5} h={9}><path d="M0 0V9L5 4.5Z" fill="#555" stroke="none" /></Icon></ScrollPart>
      </HTrack>
    </SheetBar>
    <StatusBar>
      <Label s={13.2} w={36}>Ready</Label>
      <ViewCell $on $ml={1503}>
        <Icon w={17} h={16} stroke="#605e5c" sw={1.5}><path d="M0.8 0.8H16.2V15.2H0.8ZM0.8 5.5H16.2M0.8 10.3H16.2M6 .8V15M11 .8V15" /></Icon>
      </ViewCell>
      <ViewCell>
        <Icon w={18} h={16} stroke="#605e5c" sw={1.5}><path d="M0.8 0.8H17.2V15.2H0.8ZM4.5 3.5H13.5V12.8H4.5ZM6.5 6H11.5M6.5 8.2H11.5M6.5 10.4H11.5" /></Icon>
      </ViewCell>
      <ViewCell>
        <Icon w={18} h={16} stroke="#605e5c" sw={1.5}><path d="M0.8 0.8H17.2V15.2H0.8ZM1 10.3H11.5V1M6 1V10" /></Icon>
      </ViewCell>
      <Icon w={10} h={2} ml={6}><path d="M0 1H10" /></Icon>
      <Icon w={125} h={14} ml={7} stroke="#a6a4a2" sw={1}><path d="M0 7.5H125" /><path d="M59 0H65V14H59Z" fill="#777573" stroke="none" /></Icon>
      <Icon w={10} h={10} ml={5}><path d="M0 5H10M5 0V10" /></Icon>
      <Label s={12.6} w={25} ml={17}>98%</Label>
    </StatusBar>
  </>
);

/* ---------- taskbar ---------- */

const Taskbar = styled.footer`
  display: flex;
  height: 50px;
  background: #cbe0e6;
  color: #111;
`;
const Start = styled.div`
  display: grid;
  place-items: center;
  width: 60px;
`;
const TaskSearch = styled.div`
  display: flex;
  align-items: center;
  width: 430px;
  padding-left: 14px;
  background: #fff;
  border: 1px solid #c3ccd0;
  > span { padding-top: 2px; }
`;
const TaskButton = styled.div<{ $w?: number; $bg?: string; $line?: string; $ml?: number }>`
  display: grid;
  place-items: center;
  flex: none;
  width: ${(p) => p.$w ?? 62}px;
  height: 50px;
  margin-left: ${(p) => p.$ml ?? 0}px;
  background: ${(p) => p.$bg ?? "transparent"};
  ${(p) => p.$line && css`box-shadow: inset 0 -3px ${p.$line};`}
`;
const Tray = styled.div`
  display: flex;
  align-items: center;
  height: 50px;
  margin-left: 94px;
  > span { padding-top: 2px; }
`;
const Clock = styled.div`
  display: grid;
  justify-items: center;
  align-content: center;
  row-gap: 3px;
  width: 76px;
  margin-left: 15px;
  padding-top: 3px;
`;
const Logo = styled.span<{ $s: number; $serif?: boolean }>`
  grid-area: 1 / 1;
  z-index: 1;
  color: #fff;
  font: 700 ${(p) => p.$s}px/1 ${(p) => (p.$serif ? `"Liberation Serif", serif` : UI)};
`;
const LogoBox = styled.div<{ $ml?: number }>`
  display: grid;
  place-items: center;
  margin-left: ${(p) => p.$ml ?? 0}px;
  > svg { grid-area: 1 / 1; }
`;
const Nudge = styled(Logo)<{ $x: number; $y: number }>`
  position: relative;
  left: ${(p) => p.$x}px;
  top: ${(p) => p.$y}px;
`;
const Badge = styled(Nudge).attrs({ $s: 15, $x: 4.5, $y: 9 })`
  color: #111;
`;
const Edge = styled.i`
  width: 1px;
  height: 50px;
  margin-left: 15px;
  background: #8fa6ae;
`;
const TEAL = "#26b7cd";

const Task = () => (
  <Taskbar>
    <Start>
      <Icon w={20} h={20}><path d="M0 2.8 8.3 1.7V9.5H0ZM9.2 1.5 20 0V9.5H9.2ZM0 10.5H8.3V18.3L0 17.2ZM9.2 10.5H20V20L9.2 18.5Z" fill="#000" stroke="none" /></Icon>
    </Start>
    <TaskSearch>
      <Icon w={20} h={20} stroke="#111" sw={1.5}><circle cx="12.8" cy="7.2" r="6.4" /><path d="M8.3 11.8 0.7 19.4" /></Icon>
      <Label ml={15} w={164} s={18.4}>Type here to search</Label>
    </TaskSearch>
    <TaskButton $w={60}><Icon w={20} h={20} stroke="#000" sw={2.6}><circle cx="10" cy="10" r="8.6" /></Icon></TaskButton>
    <TaskButton $w={68}>
      <Icon w={30} h={30}>
        <path d="M0 0H30V30H0Z" fill="#000" stroke="none" /><path d="M10 5H13.5V25L10 25.5ZM17 5H20.5V25.5L17 25Z" fill="#b1060f" stroke="none" /><path d="M10 5H13.5L20.5 25.5 17 25Z" fill="#e50914" stroke="none" />
      </Icon>
    </TaskButton>
    <TaskButton $ml={2} $w={52} $line={TEAL}>
      <Icon w={28} h={28}>
        <g stroke="none">
          <path d="M14 7H26.1A14 14 0 0 0 1.9 7L8 17.5Z" fill="#ea4335" />
          <path d="M14 7H26.2A14 14 0 0 1 14 28L20.1 17.5Z" fill="#fbbc05" /><path d="M8 17.5 1.9 7A14 14 0 0 0 14 28L20.1 17.5Z" fill="#34a853" />
          <circle cx="14" cy="14" r="6.8" fill="#fff" /><circle cx="14" cy="14" r="5.3" fill="#4285f4" />
        </g>
      </Icon>
    </TaskButton>
    <TaskButton $ml={5}>
      <Icon w={30} h={28}><g stroke="none">
        <path d="M0 9.5 15 0 30 9.5V14H0Z" fill="#0b5ca8" /><path d="M2.5 9.5H27.5V20H2.5Z" fill="#eef1f4" /><path d="M0 10 18 21.5 0 28Z" fill="#1a7fd4" /><path d="M30 10V28H0L15 18.5Z" fill="#33b5f0" /><path d="M0 28 15 18.5 30 28Z" fill="#2196e3" />
      </g></Icon>
    </TaskButton>
    <TaskButton $ml={6} $w={51} $line={TEAL}>
      <Icon w={28} h={24}><g stroke="none">
        <path d="M0 1.5Q0 0 1.5 0H11L14 3H26.5Q28 3 28 4.5V22H0Z" fill="#ffcf55" /><path d="M0 1.5Q0 0 1.5 0H11L13 2.5 11 5H0Z" fill="#e2a31b" /><path d="M5 24V14Q5 12 7 12H21Q23 12 23 14V24H17.5V17.5H10.5V24Z" fill="#3a8fd8" />
      </g></Icon>
    </TaskButton>
    <TaskButton $ml={4}>
      <Icon w={28} h={28} mt={-1}><g stroke="none">
        <path d="M25 4 28 5 25.5 25.5 21 27.5Z" fill="#a98556" /><path d="M11 1.5 26.5 4.5 21 26.5 1 20Z" fill="#8fc3d0" /><path d="M11 1.5 26.5 4.5 24.5 12 7.5 8Z" fill="#dceef2" /><path d="M1 20 21 26.5 22.3 22.5 3 16.5Z" fill="#5d9fb2" />
      </g></Icon>
    </TaskButton>
    <TaskButton>
      <LogoBox>
        <Icon w={30} h={28}><g stroke="none">
          <circle cx="17" cy="4.5" r="4.3" fill="#7b83eb" /><circle cx="26" cy="6" r="3.2" fill="#5059c9" />
          <path d="M20 10.5H30V19A6 6 0 0 1 20 23Z" fill="#5059c9" /><path d="M8 10.5H24V20A8 8 0 0 1 8 20Z" fill="#7b83eb" /><path d="M1 5.5H15V21H1Z" fill="#4b53bc" />
        </g></Icon>
        <Nudge $s={11} $x={-7} $y={-1}>T</Nudge>
      </LogoBox>
    </TaskButton>
    <TaskButton>
      <Icon w={28} h={28}><path d="M8 0H20Q28 0 28 8V20Q28 28 20 28H8Q0 28 0 20V8Q0 0 8 0Z" fill="#4a8cff" stroke="none" /><path d="M5 9.5H15Q17.5 9.5 17.5 12V19H8Q5 19 5 16ZM18.5 12.8 22.5 9.8V18.8L18.5 15.8Z" fill="#fff" stroke="none" /></Icon>
    </TaskButton>
    <TaskButton>
      <Icon w={30} h={30}><circle cx="15" cy="15" r="15" fill="#15c39a" stroke="none" /><path d="M21.5 9.5A8.2 8.2 0 1 0 23 16.5M16.5 16.5H23V22.5" stroke="#fff" strokeWidth="2.4" /></Icon>
    </TaskButton>
    <TaskButton $w={61}>
      <LogoBox>
        <Icon w={30} h={30}><circle cx="15" cy="15" r="15" fill="#009b90" stroke="none" /><path d="M18 7.5H24V11M21 8V23M18.5 23H23" stroke="#5cc0b8" strokeWidth="1" /></Icon>
        <Nudge $s={22} $serif $x={-1.5} $y={0}>T</Nudge>
      </LogoBox>
    </TaskButton>
    <TaskButton $ml={2} $w={61} $bg="#f6b07c" $line="#ff7300">
      <Icon w={30} h={30} ml={-1}><path d="M0 0H30V30H0Z" fill="#1ed760" stroke="none" /><circle cx="15" cy="15" r="7.5" fill="#fff" stroke="none" /><path d="M10.5 12.5Q15.5 11 20 13.3M11 15.3Q15.5 14 19 16M11.5 18Q15 17 18 18.6" stroke="#1ed760" strokeWidth="1.4" /></Icon>
    </TaskButton>
    <TaskButton $ml={1} $w={61} $bg="#e8f1f4" $line={TEAL}>
      <LogoBox $ml={-1}>
        <Icon w={30} h={28}><g stroke="none">
          <path d="M7 0H29V28H7Z" fill="#21a366" /><path d="M18 0H29V7H18Z" fill="#33c481" /><path d="M7 7H18V14H7Z" fill="#107c41" /><path d="M18 14H29V21H18Z" fill="#107c41" /><path d="M7 14H18V21H7Z" fill="#185c37" /><path d="M7 21H29V28H7Z" fill="#185c37" /><path d="M0 6.5H14V21H0Z" fill="#107c41" />
        </g></Icon>
        <Nudge $s={12} $x={-8} $y={0}>X</Nudge>
      </LogoBox>
    </TaskButton>
    <TaskButton $ml={5} $w={51} $line={TEAL}>
      <Icon w={28} h={28}><g stroke="none">
        <path d="M0 0H28V28H0Z" fill="#2aa9ea" /><path d="M14 20 20 12 28 21V28H14Z" fill="#6b7fd6" /><path d="M0 17 9 8 27 28H0Z" fill="#17498c" /><circle cx="18.5" cy="6.5" r="2.5" fill="#fff" />
      </g></Icon>
    </TaskButton>
    <Tray>
      <LogoBox>
        <Icon w={28} h={28} mt={3}><circle cx="13" cy="13" r="14" fill="#fff" stroke="none" /><circle cx="13" cy="13" r="11.5" fill="#0a93d1" stroke="none" /><circle cx="22" cy="21" r="6.3" fill="#0a7fc0" stroke="#fff" /><path d="M22 20V24.5M22 17V18.8" stroke="#fff" strokeWidth="1.8" /></Icon>
        <Nudge $s={20} $x={-1} $y={0}>?</Nudge>
      </LogoBox>
      <Icon w={27} h={24} ml={33} mt={1}><g stroke="none">
        <circle cx="11" cy="6.5" r="7" fill="#c4dcf6" /><circle cx="19" cy="8" r="6.5" fill="#a5cbf3" /><circle cx="6" cy="9" r="6" fill="#e3effb" /><path d="M5 9H20V14.5H5Z" fill="#b8d6f6" />
        <path d="M13 12Q17 17 13.5 18 10 17 13 12ZM8 18Q11 23 8 23.5 5 23 8 18ZM20.5 15Q24 19.5 21 20 18 19.5 20.5 15Z" fill="#2f7fd6" />
      </g></Icon>
      <Label ml={11} w={38} s={18}>27°C</Label>
      <Icon w={16} h={9} ml={21} stroke="#111" sw={1.4}><path d="M0.5 8.5 8 1 15.5 8.5" /></Icon>
      <Icon w={14} h={18} ml={16} stroke="#111" sw={1.4}><path d="M1 4.5H9.5V13.5H1ZM9.5 7.5 13.5 5.5V12.5L9.5 10.5M2.5 1.5Q5.5 -.5 9 1.5M2.5 16.5Q5.5 18.5 9 16.5" /></Icon>
      <Icon w={20} h={18} ml={11}><path d="M5 13A4.5 4.5 0 0 1 4 5 5.5 5.5 0 0 1 13.5 3.5 5 5 0 0 1 18.5 9V13Z" fill="#8a8a8a" stroke="#222" /><circle cx="14.3" cy="13" r="5.6" fill="#d9232e" stroke="none" /><path d="M11 13H17.5" stroke="#fff" strokeWidth="1.8" /></Icon>
      <Icon w={16} h={16} ml={13} stroke="#222"><path d="M1 15.5Q1 2 15.5 1M4.5 15.5Q4.5 5.5 15.5 5M8 15.5Q8 9 15.5 8.7M11.5 15.5Q11.5 12.5 15.5 12.3" /><circle cx="14.5" cy="14.5" r="1.3" fill="#222" stroke="none" /></Icon>
      <Icon w={19} h={12} ml={13} stroke="#111"><path d="M.7 .7H16V11.3H.7ZM17.8 3.8V8.2" /><path d="M2.5 2.5H11V9.5H2.5Z" fill="#111" stroke="none" /></Icon>
      <Icon w={21} h={16} ml={9} stroke="#111"><path d="M0.7 5H3.5L8 1V15L3.5 11H.7ZM11 5.5Q12.5 8 11 10.5M14 3.5Q17 8 14 12.5M17 1Q22 8 17 15" /></Icon>
      <Label ml={13} w={29} s={14.8}>ENG</Label>
      <Clock><Label w={34} s={14.6}>12:43</Label><Label w={76} s={14.6}>21-07-2021</Label></Clock>
      <LogoBox $ml={23}>
        <Icon w={30} h={30} mt={8}>
          <path d="M0 0H20.5V16H12L7 20V16H0Z" fill="#000" stroke="none" /><path d="M3.5 4.5H17M3.5 8.2H17M3.5 12H11" stroke="#cbe0e6" strokeWidth="1.5" />
          <circle cx="19.5" cy="19.5" r="10" fill="#bfc4c6" stroke="#6d7375" />
        </Icon>
        <Badge>2</Badge>
      </LogoBox>
      <Edge />
    </Tray>
  </Taskbar>
);

const Screen = styled.div`
  display: flex;
  flex-direction: column;
  width: 1920px;
  height: 1080px;
  overflow: hidden;
  background: #e6e6e6;
`;
const Clipped = styled.div`
  height: 671px;
  overflow: hidden;
`;

export default function App() {
  return (
    <>
      <Global />
      <Screen>
        <Title />
        <Tabs />
        <Ribbon />
        <Formula />
        <Clipped><Workbook /></Clipped>
        <Bottom />
        <Task />
      </Screen>
    </>
  );
}
